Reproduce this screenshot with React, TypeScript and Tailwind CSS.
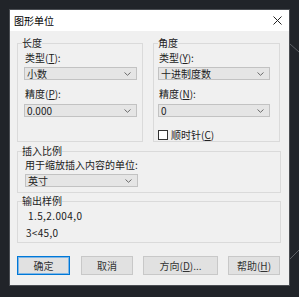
import React from "react";

const font = "font-['Noto_Sans_CJK_SC','Microsoft_YaHei',sans-serif]";

function Chevron() {
  return (
    <svg width="7" height="4" viewBox="0 0 7 4" className="shrink-0">
      <path d="M0.5 0.5 L3.5 3.3 L6.5 0.5" fill="none" stroke="#6b6b6b" strokeWidth="1" />
    </svg>
  );
}

function Select({ value, w, mt }: { value: string; w: string; mt: string }) {
  return (
    <div
      className={`${w} ${mt} h-[13px] flex items-center justify-between pl-[2px] pr-[5px] bg-[#e5e5e5] border border-[#c2c2c2] text-[10px] leading-[12px] text-[#222]`}
    >
      <span>{value}</span>
      <Chevron />
    </div>
  );
}

function Label({ children, mt = "" }: { children: React.ReactNode; mt?: string }) {
  return <div className={`${mt} h-[12px] text-[10px] leading-[12px] text-[#222] pl-[1px]`}>{children}</div>;
}

function Group({
  title,
  className,
  inner,
  children,
}: {
  title: string;
  className: string;
  inner: string;
  children: React.ReactNode;
}) {
  return (
    <fieldset className={`border border-[#dadada] p-0 ${className}`}>
      <legend className="ml-[4px] text-[10px] leading-[12px] text-[#222]">{title}</legend>
      <div className={inner}>{children}</div>
    </fieldset>
  );
}

function Button({
  children,
  w,
  primary,
}: {
  children: React.ReactNode;
  w: string;
  primary?: boolean;
}) {
  return (
    <div
      className={`${w} h-[19px] flex items-center justify-center bg-[#e1e1e1] text-[10px] text-[#333] border ${
        primary ? "border-[#0078d7] shadow-[inset_0_0_0_1px_#7fb6e6]" : "border-[#c8c8c8]"
      }`}
    >
      {children}
    </div>
  );
}

export default function App() {
  return (
    <div className={`relative w-[299px] h-[297px] bg-[#212429] pl-[9px] pt-[9px] overflow-hidden ${font}`}>
      {/* background drawing lines */}
      <svg className="absolute inset-0 pointer-events-none" width="299" height="297">
        <line x1="290" y1="44" x2="299" y2="52" stroke="#6d7075" strokeWidth="0.8" />
        <line x1="290" y1="259" x2="299" y2="250" stroke="#6d7075" strokeWidth="0.8" />
      </svg>

      <div className="relative w-[281px] h-[277px] bg-[#f0f0f0] border border-[#4a4d52] flex flex-col">
        {/* title bar */}
        <div className="h-[21px] bg-white flex items-center justify-between pl-[4px] pr-[7px]">
          <span className="text-[10px] text-black">图形单位</span>
          <svg width="9" height="9" viewBox="0 0 9 9">
            <path d="M0.5 0.5 L8.5 8.5 M8.5 0.5 L0.5 8.5" stroke="#222" strokeWidth="1" />
          </svg>
        </div>

        <div className="flex flex-col px-[7px] pt-[6px]">
          <div className="flex gap-[10px]">
            <Group title="长度" className="w-[126px] h-[105px]" inner="pl-[6px] pt-[3px]">
              <Label>
                类型(<u>T</u>):
              </Label>
              <Select value="小数" w="w-[113px]" mt="mt-[3px]" />
              <Label mt="mt-[8px]">
                精度(<u>P</u>):
              </Label>
              <Select value="0.000" w="w-[113px]" mt="mt-[4px]" />
            </Group>
            <Group title="角度" className="w-[127px] h-[105px]" inner="pl-[4px] pt-[3px]">
              <Label>
                类型(<u>Y</u>):
              </Label>
              <Select value="十进制度数" w="w-[112px]" mt="mt-[3px]" />
              <Label mt="mt-[8px]">
                精度(<u>N</u>):
              </Label>
              <Select value="0" w="w-[112px]" mt="mt-[4px]" />
              <div className="mt-[12px] flex items-center gap-[3px]">
                <div className="w-[10px] h-[10px] bg-white border border-[#333]" />
                <span className="text-[10px] leading-[12px] text-[#222]">
                  顺时针(<u>C</u>)
                </span>
              </div>
            </Group>
          </div>

          <Group title="插入比例" className="mt-[3px] w-[264px] h-[48px]" inner="pl-[7px] pt-[2px]">
            <div className="h-[12px] text-[10px] leading-[12px] text-[#222]">用于缩放插入内容的单位:</div>
            <Select value="英寸" w="w-[113px]" mt="mt-[3px]" />
          </Group>

          <Group title="输出样例" className="mt-[2px] w-[264px] h-[48px]" inner="pl-[8px] pt-[3px]">
            <div className="h-[12px] text-[10px] leading-[12px] text-[#222] tracking-[0.4px] pl-[2px]">
              1.5,2.004,0
            </div>
            <div className="mt-[5px] h-[12px] text-[10px] leading-[12px] text-[#222] tracking-[0.3px]">
              3&lt;45,0
            </div>
          </Group>

          <div className="mt-[13px] flex">
            <Button w="w-[53px]" primary>
              确定
            </Button>
            <div className="ml-[11px]">
              <Button w="w-[52px]">取消</Button>
            </div>
            <div className="ml-[10px]">
              <Button w="w-[75px]">
                方向(<u>D</u>)...
              </Button>
            </div>
            <div className="ml-[10px]">
              <Button w="w-[52px]">
                帮助(<u>H</u>)
              </Button>
            </div>
          </div>
        </div>
      </div>
    </div>
  );
}
